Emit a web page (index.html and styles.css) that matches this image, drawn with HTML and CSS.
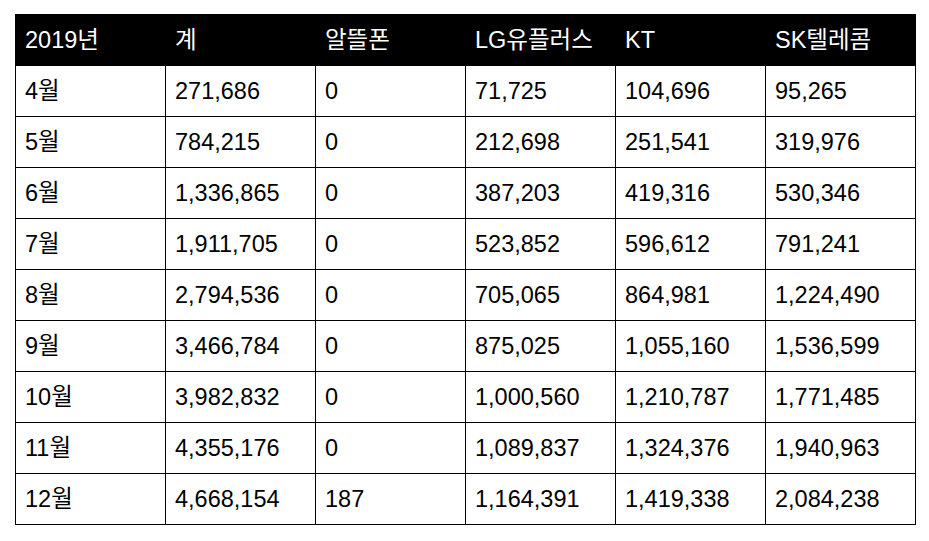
FILE: index.html
```html
<!DOCTYPE html>
<html lang="ko">
<head>
<meta charset="utf-8">
<link rel="stylesheet" href="styles.css">
</head>
<body>
<table class="stats">
  <thead>
    <tr><th>2019년</th><th>계</th><th>알뜰폰</th><th>LG유플러스</th><th>KT</th><th>SK텔레콤</th></tr>
  </thead>
  <tbody>
    <tr><td>4월</td><td>271,686</td><td>0</td><td>71,725</td><td>104,696</td><td>95,265</td></tr>
    <tr><td>5월</td><td>784,215</td><td>0</td><td>212,698</td><td>251,541</td><td>319,976</td></tr>
    <tr><td>6월</td><td>1,336,865</td><td>0</td><td>387,203</td><td>419,316</td><td>530,346</td></tr>
    <tr><td>7월</td><td>1,911,705</td><td>0</td><td>523,852</td><td>596,612</td><td>791,241</td></tr>
    <tr><td>8월</td><td>2,794,536</td><td>0</td><td>705,065</td><td>864,981</td><td>1,224,490</td></tr>
    <tr><td>9월</td><td>3,466,784</td><td>0</td><td>875,025</td><td>1,055,160</td><td>1,536,599</td></tr>
    <tr><td>10월</td><td>3,982,832</td><td>0</td><td>1,000,560</td><td>1,210,787</td><td>1,771,485</td></tr>
    <tr><td>11월</td><td>4,355,176</td><td>0</td><td>1,089,837</td><td>1,324,376</td><td>1,940,963</td></tr>
    <tr><td>12월</td><td>4,668,154</td><td>187</td><td>1,164,391</td><td>1,419,338</td><td>2,084,238</td></tr>
  </tbody>
</table>
</body>
</html>
```
FILE: styles.css
```css
html, body {
  margin: 0;
  background: #fff;
}
body {
  padding: 14px 0 0 15px;
  font-family: "Liberation Sans", Arial, "Noto Sans CJK KR", sans-serif;
  font-size: 23.5px;
  color: #000;
}
.stats {
  border-collapse: collapse;
  table-layout: fixed;
  width: 901px;
}
.stats th,
.stats td {
  width: 150px;
  height: 51px;
  box-sizing: border-box;
  padding: 1px 0 0 9px;
  text-align: left;
  vertical-align: middle;
  font-weight: normal;
  white-space: nowrap;
  line-height: 1;
}
.stats th {
  background: #000;
  color: #fff;
  border: 1px solid #000;
}
.stats td {
  border: 1px solid #000;
}
```
